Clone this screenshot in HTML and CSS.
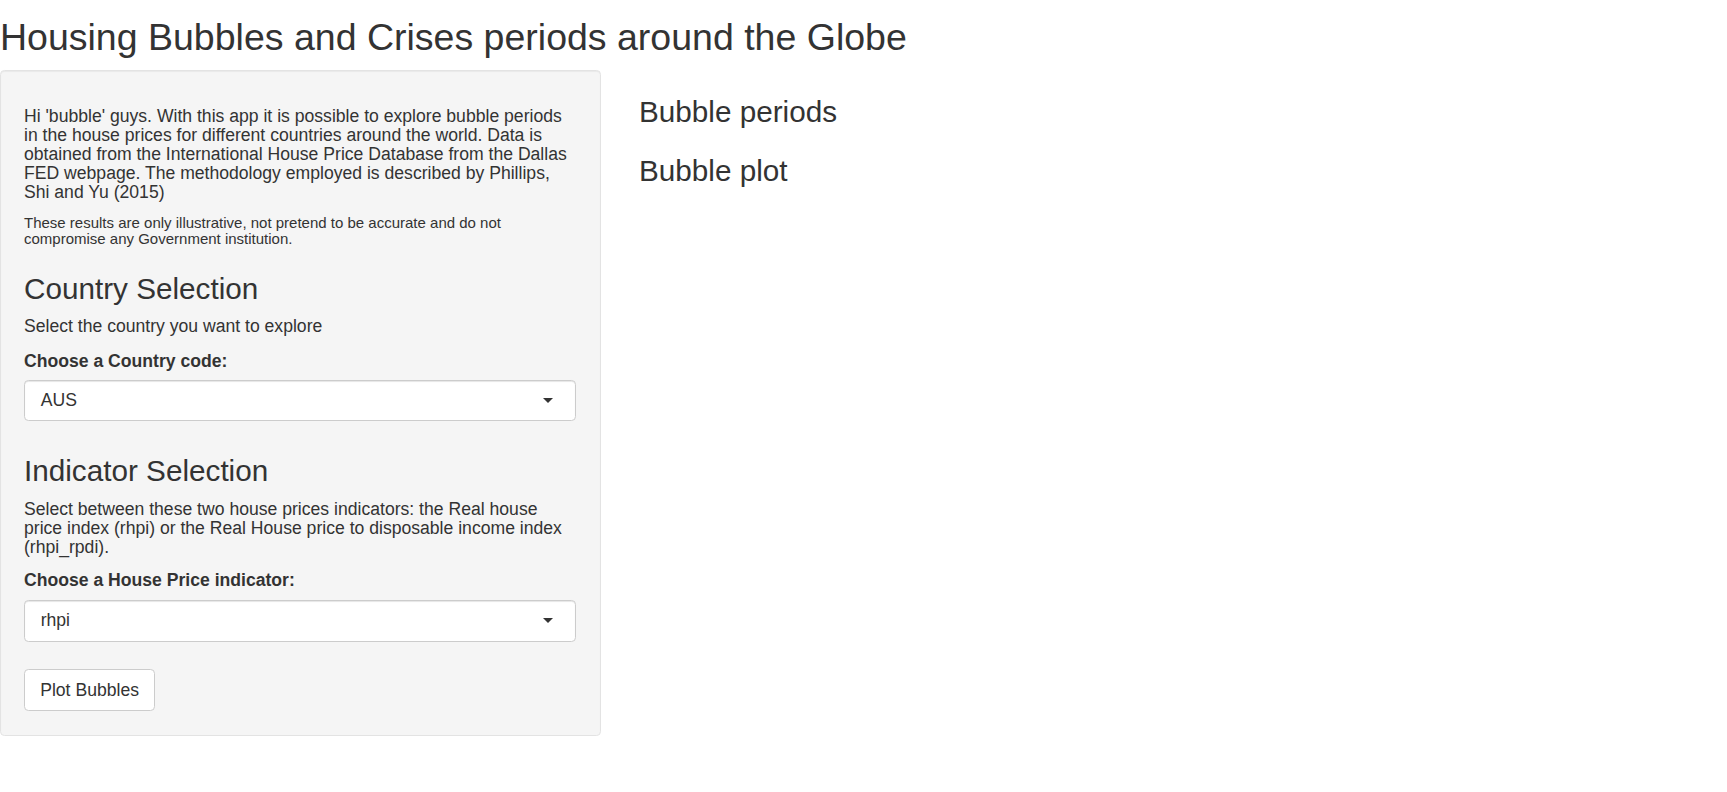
FILE: index.html
```html
<!DOCTYPE html>
<html lang="en">
<head>
<meta charset="utf-8">
<title>Housing Bubbles and Crises periods around the Globe</title>
<link rel="stylesheet" href="styles.css">
</head>
<body>
<div class="page">
  <h2 class="title">Housing Bubbles and Crises periods around the Globe</h2>
  <div class="layout">
    <div class="sidebar">
      <div class="well">
        <p class="intro">Hi 'bubble' guys. With this app it is possible to explore bubble periods in the house prices for different countries around the world. Data is obtained from the International House Price Database from the Dallas FED webpage. The methodology employed is described by Phillips, Shi and Yu (2015)</p>
        <p class="note">These results are only illustrative, not pretend to be accurate and do not compromise any Government institution.</p>

        <h3 class="section first">Country Selection</h3>
        <p class="help">Select the country you want to explore</p>
        <label class="field-label first-label">Choose a Country code:</label>
        <div class="select first-select">
          <span class="select-value">AUS</span>
          <span class="caret"></span>
        </div>

        <h3 class="section second">Indicator Selection</h3>
        <p class="help desc">Select between these two house prices indicators: the Real house price index (rhpi) or the Real House price to disposable income index (rhpi_rpdi).</p>
        <label class="field-label second-label">Choose a House Price indicator:</label>
        <div class="select second-select">
          <span class="select-value">rhpi</span>
          <span class="caret"></span>
        </div>

        <button class="btn" type="button">Plot Bubbles</button>
      </div>
    </div>
    <div class="main">
      <h3 class="main-heading periods">Bubble periods</h3>
      <h3 class="main-heading plot">Bubble plot</h3>
    </div>
  </div>
</div>
</body>
</html>
```

FILE: styles.css
```css
html, body {
  margin: 0;
  padding: 0;
  background: #ffffff;
}

body {
  font-family: "Liberation Sans", Arial, Helvetica, sans-serif;
  color: #333333;
  font-size: 17.6px;
  line-height: 19px;
}

.page {
  width: 1727px;
}

.title {
  font-weight: 400;
  font-size: 37.5px;
  line-height: 41.1px;
  margin: 17px 0 12.4px 0;
  white-space: nowrap;
}

.layout {
  display: flex;
  align-items: flex-start;
}

.sidebar {
  width: 601px;
  flex: 0 0 601px;
}

.well {
  box-sizing: border-box;
  width: 601px;
  background: #f5f5f5;
  border: 1px solid #e3e3e3;
  border-radius: 4.4px;
  box-shadow: inset 0 1px 1px rgba(0, 0, 0, 0.05);
  padding: 35.2px 25px 23.9px 23px;
  display: flex;
  flex-direction: column;
  align-items: flex-start;
}

.intro {
  margin: 0;
  font-size: 17.6px;
  line-height: 19px;
  width: 552px;
}

.note {
  margin: 13.8px 0 0 0;
  font-size: 15px;
  line-height: 15.4px;
  width: 552px;
}

.section {
  font-weight: 400;
  font-size: 29.7px;
  line-height: 32.7px;
  margin: 0;
}

.section.first {
  margin-top: 26.5px;
}

.section.second {
  margin-top: 33.7px;
}

.help {
  margin: 11.2px 0 0 0;
  font-size: 17.6px;
  line-height: 19px;
  width: 552px;
}

.help.desc {
  margin-top: 12.6px;
}

.field-label {
  display: block;
  font-weight: 700;
  font-size: 17.6px;
  line-height: 19px;
  margin: 16px 0 0 0;
}

.field-label.second-label {
  margin-top: 14.1px;
}

.select {
  box-sizing: border-box;
  width: 552px;
  height: 41.5px;
  margin-top: 9px;
  background: #ffffff;
  border: 1px solid #cccccc;
  border-radius: 4.4px;
  box-shadow: inset 0 1px 1px rgba(0, 0, 0, 0.1);
  display: flex;
  align-items: center;
  justify-content: space-between;
  padding: 0 22px 0 15.7px;
}

.select.second-select {
  margin-top: 9.9px;
}

.select-value {
  font-size: 17.6px;
  line-height: 19px;
}

.caret {
  width: 0;
  height: 0;
  border-style: solid;
  border-width: 5.6px 5.8px 0 5.8px;
  border-color: #333333 transparent transparent transparent;
}

.btn {
  box-sizing: border-box;
  margin-top: 27.8px;
  height: 41.5px;
  padding: 0 15.2px;
  font-family: "Liberation Sans", Arial, Helvetica, sans-serif;
  font-size: 17.6px;
  line-height: 19px;
  color: #333333;
  background: #ffffff;
  border: 1px solid #cccccc;
  border-radius: 4.4px;
}

.main {
  margin-left: 38px;
}

.main-heading {
  font-weight: 400;
  font-size: 29.7px;
  line-height: 32.7px;
  margin: 0;
}

.main-heading.periods {
  margin-top: 25.7px;
}

.main-heading.plot {
  margin-top: 25.7px;
}
```
